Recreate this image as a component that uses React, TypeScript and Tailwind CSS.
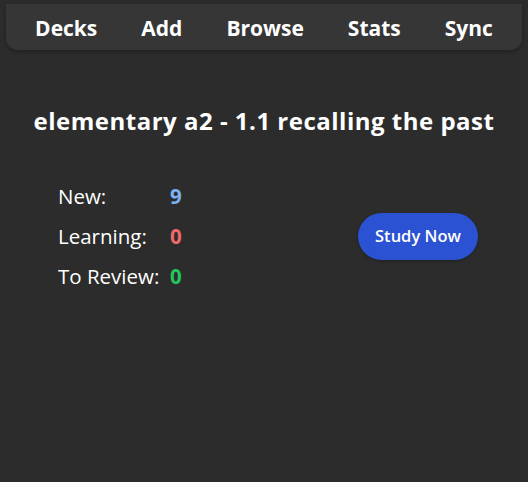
export default function App() {
  const navItems = ['Decks', 'Add', 'Browse', 'Stats', 'Sync']
  const counts = [
    { label: 'New:', value: 9, color: 'text-[#7eb2f2]' },
    { label: 'Learning:', value: 0, color: 'text-[#f06a6a]' },
    { label: 'To Review:', value: 0, color: 'text-[#22c55e]' },
  ]

  return (
    <div className="min-h-[482px] bg-[#2c2c2c] pt-1 text-white" style={{ fontFamily: '"Open Sans", "Noto Sans", sans-serif' }}>
      <nav className="mx-[6px] flex h-[46px] items-center justify-center rounded-b-xl bg-[#363636] pt-[3px] shadow-[0_2px_4px_rgba(0,0,0,0.25)]">
        {navItems.map((item) => (
          <span key={item} className="px-[22px] text-[21px] font-bold">
            {item}
          </span>
        ))}
      </nav>

      <h1 className="mt-[54px] text-center text-[24px] font-bold leading-[34px] tracking-[0.5px]">
        elementary a2 - 1.1 recalling the past
      </h1>

      <div className="mt-[38px] flex items-center justify-between pl-[58px] pr-[50px]">
        <div className="flex flex-col">
          {counts.map((c) => (
            <div key={c.label} className="flex h-[40px] items-center text-[20.5px]">
              <span className="w-[112px]">{c.label}</span>
              <span className={`font-bold ${c.color}`}>{c.value}</span>
            </div>
          ))}
        </div>
        <button className="h-[47px] w-[120px] rounded-full bg-[#2a52d2] text-[16.5px] font-semibold shadow-[0_1px_3px_rgba(0,0,0,0.3)]">
          Study Now
        </button>
      </div>
    </div>
  )
}
